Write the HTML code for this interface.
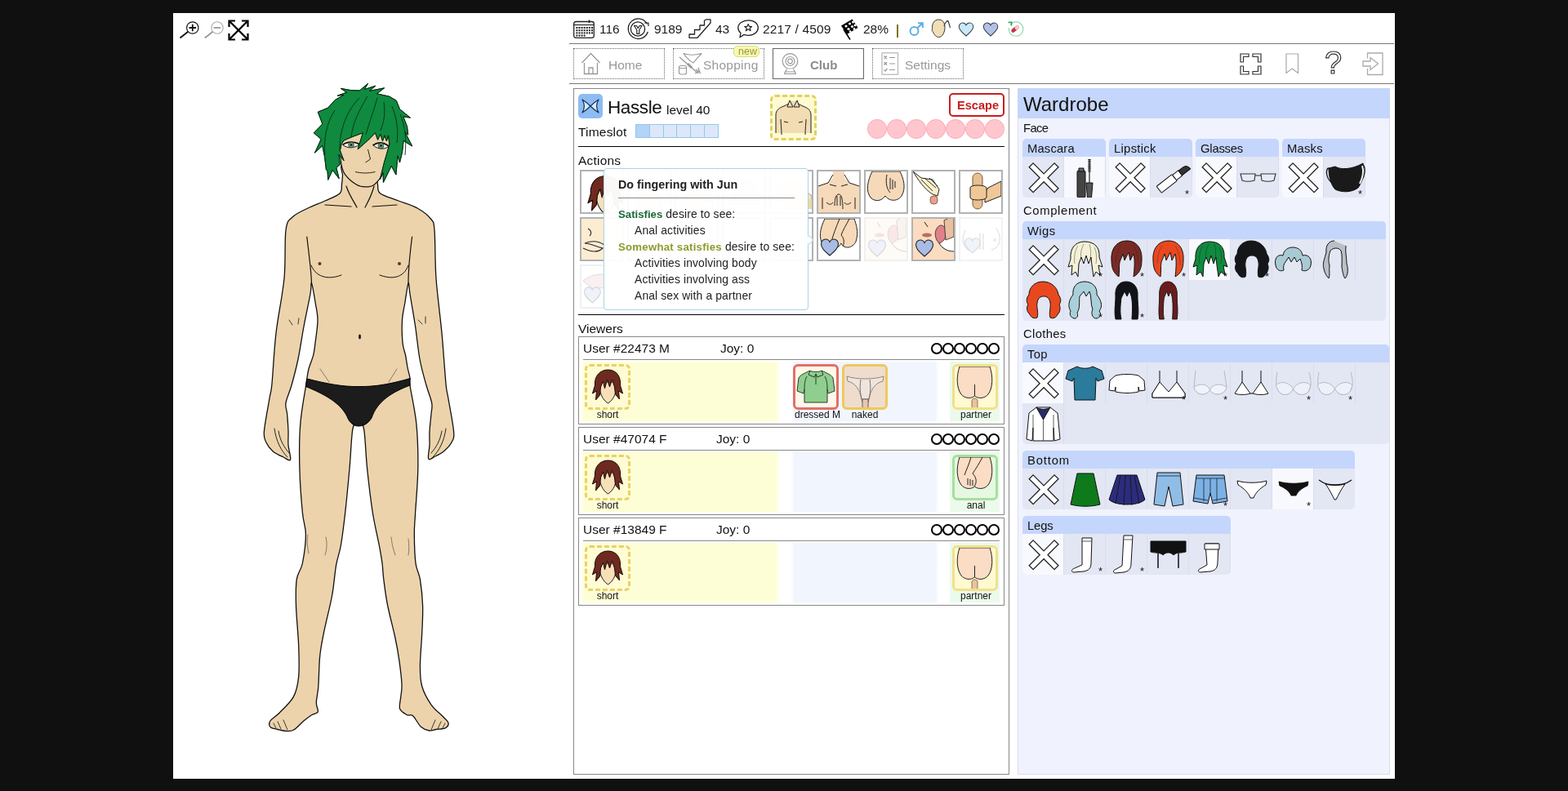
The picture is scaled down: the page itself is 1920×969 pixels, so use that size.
<!DOCTYPE html><html><head><meta charset="utf-8"><title>Club</title><style>
*{box-sizing:border-box;margin:0;padding:0}
html,body{width:1920px;height:969px;overflow:hidden;background:#101010}
body{font-family:"Liberation Sans",sans-serif;color:#1a1a1a;position:relative}
#app{position:absolute;left:212px;top:16px;width:1496px;height:938px;background:#fff}
.a{position:absolute}
.t{position:absolute;white-space:nowrap;line-height:1;will-change:transform}
svg{position:absolute;overflow:visible}
.hl{position:absolute;height:1px;background:#777}
.nav{position:absolute;top:59px;width:112px;height:38px;border:1px dotted #666}
.cell{position:absolute;width:54px;height:54px;border:2px solid #b2b2b2;background:#fff;overflow:hidden}
.cell svg,.ib svg,.wc svg{left:0;top:0}
.wc svg{will-change:transform}
.vb{position:absolute;left:708px;width:522px;height:108px;border:1px solid #888}
.ib{position:absolute;width:56px;height:56px;border-radius:6px;overflow:hidden}
.grp{position:absolute;background:#e3e6f3;border-radius:5px;overflow:hidden}
.gh{position:absolute;left:0;top:0;right:0;height:22px;background:#c5d6fc}
.wc{position:absolute;width:51px;height:50px;border-right:1px solid #d9ddee}
.sel{background:#f8f9fe}
</style></head><body><div id="app"></div>
<svg style="left:219px;top:24px;" width="28" height="26" viewBox="0 0 28 26"><circle cx="16.8" cy="10" r="7.2" fill="#fff" stroke="#111" stroke-width="1.2"/><path d="M12.5 10h8.600M16.8 5.700v8.6" stroke="#111" stroke-width="1.8" fill="none"/><path d="M1.5 22.500L11.3 14.8" stroke="#111" stroke-width="1.9"/></svg>
<svg style="left:249px;top:24px;" width="28" height="26" viewBox="0 0 28 26"><circle cx="17" cy="10" r="7.2" fill="#fff" stroke="#aaa" stroke-width="1.1"/><path d="M12.5 10h8.6" stroke="#999" stroke-width="1.8" fill="none"/><path d="M1.8 22.500L11.5 14.8" stroke="#999" stroke-width="1.9"/></svg>
<svg style="left:279px;top:24px;" width="26" height="26" viewBox="0 0 26 26"><path d="M2 2L24 24M24 2L2 24" stroke="#000" stroke-width="2.3" fill="none"/><path d="M1.5 9V1.500H9M17 1.500H24.500V9M24.5 17V24.500H17M9 24.500H1.500V17" stroke="#000" stroke-width="2.2" fill="none"/></svg>
<svg style="left:0px;top:0px;" width="700" height="969" viewBox="0 0 700 969">
<path d="M421.0 200.0C414.2 202.5 419.9 210.7 419.5 215.0C419.1 219.3 419.1 222.3 418.5 226.0C417.9 229.7 419.4 233.7 416.0 237.0C412.6 240.3 404.5 243.0 398.0 246.0C391.5 249.0 383.7 251.7 377.0 255.0C370.3 258.3 362.5 261.5 358.0 266.0C353.5 270.5 351.7 269.5 350.0 282.0C348.3 294.5 350.0 320.0 348.0 341.0C346.0 362.0 340.5 386.5 338.0 408.0C335.5 429.5 334.3 456.7 333.0 470.0C331.7 483.3 331.6 478.2 330.0 488.0C328.4 497.8 324.1 519.6 323.4 528.6C322.7 537.6 324.2 538.0 326.0 542.0C327.8 546.0 330.5 549.7 334.0 552.7C337.5 555.7 343.4 558.3 347.0 560.0C350.6 561.7 354.6 565.5 355.6 563.0C356.6 560.5 353.4 550.7 353.0 545.0C352.6 539.3 353.2 534.9 353.0 528.6C352.8 522.3 352.1 512.8 351.6 507.0C351.1 501.2 349.1 499.5 350.0 493.7C350.9 487.9 354.5 480.9 357.0 472.0C359.5 463.1 362.5 452.0 365.0 440.0C367.5 428.0 369.5 413.3 372.0 400.0C374.5 386.7 378.4 368.8 380.0 360.0C381.6 351.2 380.5 345.3 381.5 347.0C382.5 348.7 384.8 362.5 386.0 370.0C387.2 377.5 389.0 383.7 389.0 392.0C389.0 400.3 386.9 412.9 386.0 420.0C385.1 427.1 385.1 429.4 383.8 434.7C382.5 440.0 379.3 447.1 378.0 452.0C376.7 456.9 376.4 460.4 375.8 464.0C375.2 467.6 375.8 464.1 374.4 473.5C373.0 482.9 368.9 503.8 367.7 520.5C366.4 537.2 366.4 556.1 366.9 574.0C367.3 591.9 369.1 614.5 370.4 628.0C371.6 641.5 374.4 644.4 374.4 654.7C374.4 665.0 372.2 680.8 370.4 690.0C368.5 699.2 364.6 701.0 363.3 709.7C362.0 718.4 362.1 728.4 362.5 742.0C362.9 755.6 365.2 777.1 365.7 791.5C366.2 805.9 366.7 818.3 365.7 828.6C364.7 838.9 363.4 846.0 359.5 853.4C355.6 860.8 346.9 868.3 342.2 873.2C337.4 878.1 332.9 880.1 331.0 883.0C329.1 885.9 329.6 888.9 331.0 890.6C332.4 892.4 336.6 892.7 339.7 893.5C342.8 894.3 346.3 895.4 349.6 895.5C352.9 895.6 355.8 896.4 359.5 894.3C363.2 892.2 368.3 886.1 372.0 883.0C375.7 879.9 378.9 877.5 381.8 875.7C384.7 873.9 388.4 874.5 389.3 872.0C390.2 869.5 387.2 866.0 387.3 860.8C387.4 855.6 389.1 850.5 389.8 841.0C390.5 831.5 390.6 815.1 391.7 803.9C392.8 792.7 394.2 786.4 396.7 774.0C399.2 761.6 404.1 743.1 406.6 729.5C409.1 715.9 409.8 702.6 411.6 692.4C413.4 682.1 415.5 678.7 417.4 668.0C419.2 657.3 420.9 643.7 422.7 628.0C424.5 612.3 426.4 591.2 428.0 574.0C429.6 556.8 430.2 533.8 432.0 525.0C433.8 516.2 436.6 521.0 438.8 521.0C441.1 521.0 443.7 516.2 445.5 525.0C447.3 533.8 447.8 556.8 449.6 574.0C451.4 591.2 453.9 612.3 456.3 628.0C458.8 643.7 462.4 657.7 464.3 668.0C466.2 678.3 467.1 683.0 468.0 690.0C468.9 697.0 468.7 701.0 469.8 709.7C470.9 718.4 472.4 730.5 474.7 742.0C477.0 753.5 481.0 767.9 483.4 779.0C485.8 790.1 487.4 798.9 488.8 808.8C490.2 818.7 491.7 831.1 492.0 838.5C492.3 845.9 491.2 848.4 490.8 853.4C490.4 858.4 488.4 864.6 489.6 868.3C490.9 872.0 495.6 874.2 498.3 875.7C501.0 877.2 502.8 874.5 505.7 877.0C508.6 879.5 512.3 887.6 515.6 890.6C518.9 893.6 522.4 894.5 525.5 895.0C528.6 895.5 530.9 894.0 534.2 893.5C537.5 893.0 542.8 893.1 545.3 891.8C547.8 890.5 549.4 887.9 549.0 885.6C548.6 883.3 546.3 881.9 542.8 878.2C539.3 874.5 532.3 869.5 528.0 863.3C523.7 857.1 519.1 848.9 516.8 841.0C514.5 833.1 514.4 827.4 514.4 816.2C514.4 805.0 516.3 786.4 516.8 774.0C517.3 761.6 518.0 752.7 517.6 742.0C517.2 731.3 515.8 718.4 514.4 709.7C513.0 701.0 510.2 699.2 509.0 690.0C507.8 680.8 507.4 665.0 507.3 654.7C507.2 644.4 507.9 641.5 508.6 628.0C509.4 614.5 511.6 591.9 511.8 574.0C512.0 556.1 511.6 537.5 510.0 520.5C508.4 503.5 503.3 481.6 502.0 472.0C500.7 462.4 502.5 466.7 502.0 463.0C501.5 459.3 499.9 454.7 499.0 450.0C498.1 445.3 497.5 440.0 496.5 435.0C495.5 430.0 493.7 427.2 493.0 420.0C492.3 412.8 492.0 400.3 492.5 392.0C493.0 383.7 494.8 377.5 496.0 370.0C497.2 362.5 499.0 348.7 500.0 347.0C501.0 345.3 500.6 351.2 502.0 360.0C503.4 368.8 506.6 386.7 508.6 400.0C510.6 413.3 511.8 428.0 514.0 440.0C516.2 452.0 519.5 463.1 522.0 472.0C524.5 480.9 527.7 487.9 528.7 493.7C529.7 499.5 528.5 501.2 528.0 507.0C527.5 512.8 526.3 522.3 526.0 528.6C525.7 534.9 526.2 539.4 526.0 545.0C525.8 550.6 523.5 559.7 524.7 562.0C525.9 564.3 529.9 560.5 533.0 559.0C536.1 557.5 540.2 555.5 543.5 552.7C546.8 549.9 550.9 546.0 552.9 542.0C554.9 538.0 556.3 537.6 555.6 528.6C554.9 519.6 550.5 497.8 548.9 488.0C547.3 478.2 547.3 483.3 546.0 470.0C544.7 456.7 543.0 429.5 541.0 408.0C539.0 386.5 535.5 362.0 534.0 341.0C532.5 320.0 533.1 294.2 532.0 282.0C530.9 269.8 530.9 272.5 527.4 268.0C523.9 263.5 517.6 258.7 511.0 255.0C504.4 251.3 495.6 249.0 488.0 246.0C480.4 243.0 469.9 240.3 465.7 237.0C461.4 233.7 463.2 229.7 462.5 226.0C461.8 222.3 461.9 219.3 461.5 215.0C461.1 210.7 466.8 202.5 460.0 200.0C453.2 197.5 427.8 197.5 421.0 200.0Z" fill="#ecd3ab" stroke="#111" stroke-width="1.3" stroke-linejoin="round"/>
<path d="M375.8 464 C400 470 420 474 438.8 473.5 C460 474 480 470 502 463.6 L502 472 C481 480 462 491 455 512 C450 520 444 522 438.8 522 C432 522 427 516 425 510 C417 494 398 483 374.4 473.5 Z" fill="#1c1c1c" stroke="#000" stroke-width="1"/>
<g stroke="#111" stroke-width="1.2" fill="none" stroke-linecap="round">
<path d="M375.8 290 C378 310 381 330 381.5 347 M504.6 290 C502 310 500 330 500 347"/>
<path d="M398 251 L430 253 M456 253 L486 251 M424 228 C428 240 434 248 437 254 M458 228 C455 240 450 248 447 254"/>
<path d="M381 325 C388 342 405 342 418 337 M465 337 C478 342 494 342 500 325" stroke-width="1"/>
<path d="M392 452 L403 468 M486 452 L476 468" stroke-width="0.7" stroke="#555"/>
<path d="M377 655 C375 665 377 672 378 678 M399 658 C401 666 400 674 398 680 M479 658 C480 668 482 674 484 680 M500 660 C501 668 501 674 500 680" stroke-width="0.7" stroke="#555"/>
<path d="M354 392 L358 398 M366 390 L365 397 M512 392 L517 397 M521 388 L521 396" stroke-width="0.8"/>
<path d="M336 525 C338 540 344 552 352 560 M341 528 C343 540 348 548 354 555 M546 525 C544 540 538 552 530 560 M541 528 C539 540 534 548 528 555" stroke-width="0.9"/>
<path d="M335 886 L338 892 M340 884 L344 893 M347 882 L352 894 M545 886 L542 892 M540 884 L536 893 M533 882 L528 894" stroke-width="0.8"/>
</g>
<circle cx="391.5" cy="323" r="2" fill="#5a3530"/><circle cx="489" cy="323" r="2" fill="#5a3530"/>
<ellipse cx="440.5" cy="412.5" rx="1.5" ry="3" fill="#222"/>
<path d="M416.4 155.0C411.3 162.8 416.2 175.1 416.4 182.9C416.7 190.6 417.0 196.3 418.0 201.5C419.0 206.6 419.5 209.7 422.6 213.8C425.7 218.0 432.4 223.7 436.6 226.2C440.7 228.7 443.8 228.9 447.4 228.9C451.0 228.9 454.6 229.0 458.2 226.2C461.8 223.5 466.4 217.5 469.1 212.3C471.7 207.1 472.7 201.2 474.0 195.3C475.4 189.3 476.7 183.4 477.1 176.7C477.6 170.0 481.8 161.7 476.8 155.0C471.9 148.3 457.5 136.4 447.4 136.4C437.3 136.4 421.6 147.3 416.4 155.0Z" fill="#ecd3ab" stroke="#111" stroke-width="1.2"/>
<g stroke="#111" stroke-width="1" fill="none">
<path d="M420 177.500C425 173.5 434 173.5 440 177 434 182 425 182 420 177.500Z" fill="#f4f4f0"/>
<path d="M457 178C463 174 470 174.5 476 179.5 470 183.5 463 183 457 178Z" fill="#f4f4f0"/>
<path d="M419.5 177.500C425 173 434 173 440.5 176.500M456.5 178C463 173.5 470 174 476.5 179.5" stroke-width="1.7"/>
<path d="M450.5 183 L453.5 195 L447.5 199 M435 210.5 C442 212.5 452 212.5 459.5 210.5" stroke-width="0.9"/>
</g>
<circle cx="430" cy="177.5" r="3.4" fill="#6d9a7c" stroke="#222" stroke-width="0.6"/><circle cx="466.5" cy="178.5" r="3.4" fill="#6d9a7c" stroke="#222" stroke-width="0.6"/>
<circle cx="430" cy="177.5" r="1.3" fill="#111"/><circle cx="466.5" cy="178.5" r="1.3" fill="#111"/>
<path d="M440.4 110.9L450.5 102.4L446.2 109.5L459.8 105.2L452.4 111.4L470.6 107.8L461.6 114.8L476.8 118.2L485.3 123.3L489.5 133.7L502.4 144.2L493.8 142.9L498.5 155.0L499.7 165.1L495.7 161.5L504.7 179.0L494.1 172.4L492.6 186.3L489.5 199.1L487.0 190.9L484.9 214.1L479.3 203.3L476.8 208.4L469.4 223.4L469.1 211.5L465.2 220.0L470.6 198.4L473.4 189.1L476.8 176.7L475.6 165.9L473.4 172.8L470.9 165.9L468.5 172.8L465.7 164.3L462.6 171.3L459.5 162.8L450.5 172.0L438.1 182.9L444.3 162.8L431.9 167.4L421.1 172.0L418.0 176.7L416.4 184.4L421.1 196.8L414.9 189.1L416.4 201.5L411.8 205.3L415.2 218.8L407.2 208.4L401.7 220.3L401.0 209.2L399.4 208.0L397.6 192.5L394.8 178.5L385.5 187.2L393.2 170.5L384.2 162.8L394.8 151.9L389.3 137.2L401.7 132.1L410.2 122.5L421.1 116.3L413.3 117.2L424.5 113.2L417.2 108.3L429.6 110.6Z" fill="#0f8a3e" stroke="#062" stroke-width="1" stroke-linejoin="round"/>
<path d="M440.4 110.9L450.5 102.4L446.2 109.5L459.8 105.2L452.4 111.4L470.6 107.8L461.6 114.8L476.8 118.2L485.3 123.3L489.5 133.7L502.4 144.2L493.8 142.9L498.5 155.0L499.7 165.1L495.7 161.5L504.7 179.0L494.1 172.4L492.6 186.3L489.5 199.1L487.0 190.9L484.9 214.1L479.3 203.3L476.8 208.4L469.4 223.4L469.1 211.5L465.2 220.0L470.6 198.4L473.4 189.1L476.8 176.7L475.6 165.9L473.4 172.8L470.9 165.9L468.5 172.8L465.7 164.3L462.6 171.3L459.5 162.8L450.5 172.0L438.1 182.9L444.3 162.8L431.9 167.4L421.1 172.0L418.0 176.7L416.4 184.4L421.1 196.8L414.9 189.1L416.4 201.5L411.8 205.3L415.2 218.8L407.2 208.4L401.7 220.3L401.0 209.2L399.4 208.0L397.6 192.5L394.8 178.5L385.5 187.2L393.2 170.5L384.2 162.8L394.8 151.9L389.3 137.2L401.7 132.1L410.2 122.5L421.1 116.3L413.3 117.2L424.5 113.2L417.2 108.3L429.6 110.6Z" fill="none" stroke="#0a1a10" stroke-width="0.9" stroke-linejoin="round"/>
<g stroke="#04301a" stroke-width="0.9" fill="none">
<path d="M440 120 C425 135 415 160 416 185 M450 118 C440 135 432 150 430 168 M462 120 C458 135 452 150 448 165 M470 125 C472 140 470 150 466 160 M480 130 C486 145 488 160 486 175 M410 135 C400 150 396 170 398 190 M490 140 C496 155 498 170 496 190"/>
</g>
</svg>
<svg style="left:702px;top:24px;" width="26" height="23" viewBox="0 0 26 23"><rect x="0.7" y="2.5" width="24.6" height="19.8" rx="2.5" fill="#fff" stroke="#222" stroke-width="1.3"/><path d="M1 6.5H25" stroke="#222" stroke-width="1.2"/><path d="M19.5 0.5V4" stroke="#222" stroke-width="1.6"/>
<g fill="#222"><rect x="3.4" y="9.0" width="2" height="2"/><rect x="6.5" y="9.0" width="2" height="2"/><rect x="9.6" y="9.0" width="2" height="2"/><rect x="12.700000000000001" y="9.0" width="2" height="2"/><rect x="15.8" y="9.0" width="2" height="2"/><rect x="18.9" y="9.0" width="2" height="2"/><rect x="22.0" y="9.0" width="2" height="2"/><rect x="3.4" y="12.2" width="2" height="2"/><rect x="6.5" y="12.2" width="2" height="2"/><rect x="9.6" y="12.2" width="2" height="2"/><rect x="12.700000000000001" y="12.2" width="2" height="2"/><rect x="15.8" y="12.2" width="2" height="2"/><rect x="18.9" y="12.2" width="2" height="2"/><rect x="22.0" y="12.2" width="2" height="2"/><rect x="3.4" y="15.4" width="2" height="2"/><rect x="6.5" y="15.4" width="2" height="2"/><rect x="9.6" y="15.4" width="2" height="2"/><rect x="12.700000000000001" y="15.4" width="2" height="2"/><rect x="15.8" y="15.4" width="2" height="2"/><rect x="18.9" y="15.4" width="2" height="2"/><rect x="22.0" y="15.4" width="2" height="2"/><rect x="3.4" y="18.6" width="2" height="2"/><rect x="6.5" y="18.6" width="2" height="2"/><rect x="9.6" y="18.6" width="2" height="2"/><rect x="12.700000000000001" y="18.6" width="2" height="2"/></g></svg>
<div class="t" style="left:734px;top:28.4px;font-size:15.5px;color:#1a1a1a;font-weight:normal;">116</div>
<svg style="left:768px;top:22px;" width="27" height="27" viewBox="0 0 27 27"><path d="M24.5 7.5A12.3 12.3 0 1 0 25.3 17" fill="none" stroke="#222" stroke-width="1.3"/><circle cx="13" cy="13.5" r="8.6" fill="none" stroke="#222" stroke-width="1.3"/><path d="M8.5 9.5h3l1.8 3 1.8-3h3l-3.3 5v4.8h-3v-4.8z" fill="#fff" stroke="#222" stroke-width="1.2" stroke-linejoin="round"/><path d="M21 6h5v4" fill="none" stroke="#222" stroke-width="1.2"/></svg>
<div class="t" style="left:800.5px;top:28.4px;font-size:15.5px;color:#1a1a1a;font-weight:normal;">9189</div>
<svg style="left:843px;top:23px;" width="28" height="24" viewBox="0 0 28 24"><path d="M1 23.3V19h6.5v-5.5H14V8h5.5V2.2L22 0.8h5V5L11 23.3z" fill="#fff" stroke="#222" stroke-width="1.3" stroke-linejoin="round"/></svg>
<div class="t" style="left:875.5px;top:28.4px;font-size:15.5px;color:#1a1a1a;font-weight:normal;">43</div>
<svg style="left:903px;top:24px;" width="26" height="23" viewBox="0 0 26 23"><path d="M13.5 0.8C20.5 0.8 25.3 5 25.3 10S20.5 19.3 13.5 19.3c-2 0-3.8-.3-5.4-.9L3 21.8l1-5.3C2 14.8.8 12.5.8 10 .8 5 6.5.8 13.5.8z" fill="#fff" stroke="#222" stroke-width="1.3" stroke-linejoin="round"/><path d="M13.2 5.500l1.3 3h3.200l-2.6 2 1 3.2-2.9-2-2.9 2 1-3.2-2.6-2h3.200z" fill="none" stroke="#222" stroke-width="1.1" stroke-linejoin="round"/></svg>
<div class="t" style="left:934px;top:28.4px;font-size:15.5px;color:#1a1a1a;font-weight:normal;letter-spacing:0.15px">2217 / 4509</div>
<svg style="left:1028px;top:22px;" width="24" height="27" viewBox="0 0 24 27"><path d="M2 9.500L15.5 1.5 22.5 12 9 20z" fill="#000"/><path d="M5 14L13 26.5" stroke="#000" stroke-width="1.6"/><g fill="#fff"><circle cx="8" cy="10" r="1.6"/><circle cx="12.5" cy="7" r="1.6"/><circle cx="16.5" cy="5" r="1.5"/><circle cx="11" cy="13.5" r="1.6"/><circle cx="15.5" cy="10.5" r="1.6"/><circle cx="19" cy="9" r="1.4"/><circle cx="13" cy="16.5" r="1.3"/><circle cx="18" cy="13.5" r="1.4"/></g></svg>
<div class="t" style="left:1056.5px;top:28.4px;font-size:15.5px;color:#1a1a1a;font-weight:normal;">28%</div>
<div class="a" style="left:1097.500px;top:29.500px;width:2px;height:16px;background:#7d7520"></div>
<svg style="left:1113px;top:27px;" width="19" height="18" viewBox="0 0 19 18"><circle cx="6.5" cy="11" r="5" fill="none" stroke="#5aaee2" stroke-width="2"/><path d="M10 7.500L16.5 1.500M11 1.200h5.800v5.8" fill="none" stroke="#5aaee2" stroke-width="2"/></svg>
<svg style="left:1140px;top:23px;" width="25" height="24" viewBox="0 0 25 24"><path d="M9.5 1C4 1 1.5 6 1.5 10.500c0 2 0.5 3-.5 4 .5 1 1.5 1.5 1.5 1.500C4 20 6.5 22.5 9.5 22.500c4 0 7.5-5.5 7.5-12S13.5 1 9.5 1z" fill="#f0deb8" stroke="#333" stroke-width="1"/><path d="M16 9C17 5 19 3 21 2.500M21 2.500l-2.5.5M21 2.500L23.5 11" fill="none" stroke="#333" stroke-width="1.1"/></svg>
<svg style="left:1173px;top:26.5px;" width="20" height="18" viewBox="0 0 20 18.5"><path d="M10 17.500C4 12.5 1 9.5 1 6 1 3 3.2 1 5.6 1 7.5 1 9.2 2.2 10 4 10.8 2.2 12.5 1 14.4 1 16.8 1 19 3 19 6c0 3.5-3 6.5-9 11.500z" fill="#c9e9fa" stroke="#3a4550" stroke-width="1.1"/></svg>
<svg style="left:1203px;top:26.5px;" width="20" height="18" viewBox="0 0 20 18.5"><path d="M10 17.500C4 12.5 1 9.5 1 6 1 3 3.2 1 5.6 1 7.5 1 9.2 2.2 10 4 10.8 2.2 12.5 1 14.4 1 16.8 1 19 3 19 6c0 3.5-3 6.5-9 11.500z" fill="#b3c1e6" stroke="#3a4550" stroke-width="1.1"/></svg>
<svg style="left:1233px;top:25px;" width="20" height="20" viewBox="0 0 20 20"><path d="M4 5.500A8.7 8.7 0 1 1 2.5 9" fill="none" stroke="#8fd7a8" stroke-width="1.1"/><path d="M1.5 2.500l4.2-.3-.3 4.2" fill="none" stroke="#2faa55" stroke-width="1.6"/><rect x="4.5" y="8.2" width="11" height="4.6" rx="2.3" transform="rotate(-40 10 10.5)" fill="#c8323c"/><rect x="10" y="8.2" width="5.5" height="4.6" rx="2.3" transform="rotate(-40 10 10.5)" fill="#f3c9cc"/></svg>
<div class="hl" style="left:697px;top:53px;width:1010px"></div>
<div class="hl" style="left:697px;top:102px;width:1010px"></div>
<div class="nav" style="left:702px"></div>
<svg style="left:711px;top:64px;" width="25" height="28" viewBox="0 0 25 28"><path d="M1.5 13L12.5 1.5 23.5 13" fill="none" stroke="#999" stroke-width="1.3" stroke-linejoin="round"/><path d="M4.5 13v13.500h16V13" fill="none" stroke="#999" stroke-width="1.3"/><path d="M10 26.500v-7.500h5v7.5" fill="none" stroke="#999" stroke-width="1.3"/></svg>
<div class="t" style="left:745px;top:71.9px;font-size:15.5px;color:#999;font-weight:normal;">Home</div>
<div class="nav" style="left:824px"></div>
<svg style="left:830px;top:64px;" width="30" height="28" viewBox="0 0 30 28"><path d="M7 1.500C14 4 22 3.5 29 1.5 25 6 21 10 19 13 15 11 10 6 7 1.500z" fill="#fff" stroke="#999" stroke-width="1.2" stroke-linejoin="round"/><path d="M2 6L25 26M22 21l5 4-2-6M21 26l5-3" fill="none" stroke="#999" stroke-width="1.4"/><path d="M12 14l5 5" stroke="#999" stroke-width="3"/><rect x="1.5" y="16.5" width="9" height="10.5" rx="2" fill="#fff" stroke="#999" stroke-width="1.2"/><path d="M1.5 19.500h9" stroke="#999" stroke-width="1"/></svg>
<div class="t" style="left:860.5px;top:71.9px;font-size:15.5px;color:#999;font-weight:normal;letter-spacing:0.25px">Shopping</div>
<div class="a" style="left:898px;top:56px;width:32px;height:14px;background:#f7f7b5;border:1px solid #dcdc80;border-radius:5px"></div>
<div class="t" style="left:903.5px;top:56.9px;font-size:12.5px;color:#9a9a3a;font-weight:normal;">new</div>
<div class="nav" style="left:946px;border:1px solid #666"></div>
<svg style="left:957px;top:65px;" width="21" height="27" viewBox="0 0 21 27"><circle cx="10.5" cy="10" r="9.3" fill="#fff" stroke="#999" stroke-width="1.2"/><circle cx="10.5" cy="10" r="5.5" fill="none" stroke="#999" stroke-width="1.2"/><circle cx="10.5" cy="10" r="2.8" fill="none" stroke="#999" stroke-width="1.2"/><path d="M6.5 19.500C5.5 21 4.5 23 3.5 25.500h14C16.5 23 15.5 21 14.5 19.5" fill="#fff" stroke="#999" stroke-width="1.2" stroke-linejoin="round"/><path d="M4.5 23h12" stroke="#999" stroke-width="1"/></svg>
<div class="t" style="left:991.5px;top:72.3px;font-size:15px;color:#8a8a8a;font-weight:bold;">Club</div>
<div class="nav" style="left:1068px"></div>
<svg style="left:1079px;top:64px;" width="22" height="28" viewBox="0 0 22 28"><rect x="1" y="0.8" width="19.5" height="26.5" fill="#fff" stroke="#bbb" stroke-width="1.3"/><g stroke="#999" stroke-width="1.2" fill="none"><path d="M10 6.500h7M10 14h7M10 21.500h7M3.5 4.500l3.5 3.500M7 4.500L3.5 8M3.5 12l3.5 3.500M7 12l-3.5 3.500M3.5 21.500l1.5 1.5 2.5-3"/></g></svg>
<div class="t" style="left:1108px;top:71.9px;font-size:15.5px;color:#999;font-weight:normal;">Settings</div>
<svg style="left:1518px;top:65px;" width="27" height="27" viewBox="0 0 27 27"><g fill="#fff" stroke="#333" stroke-width="1.2" stroke-linejoin="miter"><path d="M1 11V1h10v3.500H4.500V11z"/><path d="M16 1h10v10h-3.500V4.500H16z"/><path d="M1 16h3.500v6.500H11V26H1z"/><path d="M26 16v10H16v-3.500h6.500V16z"/></g></svg>
<svg style="left:1574px;top:65px;" width="17" height="26" viewBox="0 0 17 26"><path d="M1 1h14.500v23.500L8.2 19 1 24.500z" fill="#fff" stroke="#aaa" stroke-width="1.2" stroke-linejoin="miter"/></svg>
<div class="t" style="left:1621.6px;top:58.3px;font-size:38px;color:#fff;-webkit-text-stroke:1.200px #333;font-weight:normal">?</div>
<svg style="left:1668px;top:64px;" width="26" height="28" viewBox="0 0 26 28"><path d="M6.5 7.500V1H25v26.500H6.500V20" fill="#fff" stroke="#aaa" stroke-width="1.3"/><path d="M1 11h9V6.500l9.5 7.500L10 21.500V17H1z" fill="#fff" stroke="#aaa" stroke-width="1.3" stroke-linejoin="miter"/></svg>
<div class="a" style="left:702px;top:108px;width:534px;height:841px;border:1px solid #888"></div>
<div class="a" style="left:708px;top:115px;width:30px;height:30px;background:#8dbcf2;border-radius:5px"></div>
<svg style="left:708px;top:115px;" width="30" height="30" viewBox="0 0 30 30"><path d="M5 7C10 10 13 13 15 15 17 13 20 10 25 7 22 12 22 18 25 23 20 20 17 17 15 15 13 17 10 20 5 23 8 18 8 12 5 7z" fill="#dcebfb" stroke="#12305a" stroke-width="1.2" stroke-linejoin="round"/></svg>
<div class="t" style="left:743.5px;top:120.7px;font-size:22.5px;color:#111;font-weight:normal;letter-spacing:-0.4px">Hassle</div>
<div class="t" style="left:816px;top:126.6px;font-size:15.5px;color:#111;font-weight:normal;">level 40</div>
<div class="t" style="left:708px;top:153.9px;font-size:15.5px;color:#111;font-weight:normal;letter-spacing:0.2px">Timeslot</div>
<div class="a" style="left:778.0px;top:152px;width:17.8px;height:17px;background:#b5d2f8;border:1px solid #92c8ea"></div>
<div class="a" style="left:794.8px;top:152px;width:17.8px;height:17px;background:#dde7f9;border:1px solid #92c8ea"></div>
<div class="a" style="left:811.6px;top:152px;width:17.8px;height:17px;background:#dde7f9;border:1px solid #92c8ea"></div>
<div class="a" style="left:828.4px;top:152px;width:17.8px;height:17px;background:#dde7f9;border:1px solid #92c8ea"></div>
<div class="a" style="left:845.2px;top:152px;width:17.8px;height:17px;background:#dde7f9;border:1px solid #92c8ea"></div>
<div class="a" style="left:862.0px;top:152px;width:17.8px;height:17px;background:#dde7f9;border:1px solid #92c8ea"></div>
<div class="ib" style="left:943px;top:116px;width:57px;height:56px;border:3px dashed #e0d162;background:#fffbd0"><svg width="51" height="51" viewBox="0 0 51 51"><path d="M4 44V22C4 16 8 13 14 11L20 9 21 5H30L31 9 37 11C43 13 47 16 47 22V44Z" fill="#f2dcb4"/><path d="M4 44V22C4 16 8 13 14 11L20 8M47 44V22C47 16 43 13 37 11L31 8M11 46C11 38 10 32 10 27M40 46C40 38 41 32 41 27M14 30l5 1M37 30l-5 1M21 4l-3 8h7zM30 4l3 8h-7z" fill="none" stroke="#222" stroke-width="1"/></svg></div>
<div class="a" style="left:1162px;top:114px;width:68px;height:29px;border:2px solid #c81e1e;border-radius:5px;background:#fff"></div>
<div class="t" style="left:1171.5px;top:122.2px;font-size:14.6px;color:#c81e1e;font-weight:bold;">Escape</div>
<div class="a" style="left:1062.3px;top:146.3px;width:23.4px;height:23.4px;border-radius:50%;background:#ffc6cd;border:1px solid #f6aab5"></div>
<div class="a" style="left:1086.3px;top:146.3px;width:23.4px;height:23.4px;border-radius:50%;background:#ffc6cd;border:1px solid #f6aab5"></div>
<div class="a" style="left:1110.3px;top:146.3px;width:23.4px;height:23.4px;border-radius:50%;background:#ffc6cd;border:1px solid #f6aab5"></div>
<div class="a" style="left:1134.3px;top:146.3px;width:23.4px;height:23.4px;border-radius:50%;background:#ffc6cd;border:1px solid #f6aab5"></div>
<div class="a" style="left:1158.3px;top:146.3px;width:23.4px;height:23.4px;border-radius:50%;background:#ffc6cd;border:1px solid #f6aab5"></div>
<div class="a" style="left:1182.3px;top:146.3px;width:23.4px;height:23.4px;border-radius:50%;background:#ffc6cd;border:1px solid #f6aab5"></div>
<div class="a" style="left:1206.3px;top:146.3px;width:23.4px;height:23.4px;border-radius:50%;background:#ffc6cd;border:1px solid #f6aab5"></div>
<div class="a" style="left:708px;top:179px;width:522px;height:1px;background:#000"></div>
<div class="t" style="left:708px;top:188.9px;font-size:15.5px;color:#111;font-weight:normal;letter-spacing:0.2px">Actions</div>
<div class="a" style="left:708px;top:385px;width:522px;height:1px;background:#000"></div>
<div class="t" style="left:708px;top:395.2px;font-size:15.5px;color:#111;font-weight:normal;">Viewers</div>
<div class="cell" style="left:710px;top:208px;background:#fff;"><svg width="50" height="50" viewBox="0 0 50 50"><g transform="translate(1 2) scale(1.15)"><path d="M14 18C14 30 18 40 25 44 32 40 36 30 36 18z" fill="#f7dfb8" stroke="#222" stroke-width="1"/><path d="M25 3C15 3 8 11 9 22L6 32 11 29 10 40 15 34 16 24 19 17 21 26 24 15 27 24 30 15 33 24 34 33 39 39 38 29 43 32 40 22C41 11 35 3 25 3z" fill="#6e2a20" stroke="#1a0a08" stroke-width="1" stroke-linejoin="round"/></g></svg></div>
<div class="cell" style="left:768px;top:208px;background:#fff;"><svg width="50" height="50" viewBox="0 0 50 50"><path d="M10 50C10 30 15 15 25 10 35 15 40 30 40 50z" fill="#f3d6c8" stroke="#999" stroke-width="1"/></svg></div>
<div class="cell" style="left:826px;top:208px;background:#fff;"><svg width="50" height="50" viewBox="0 0 50 50"><path d="M5 50C8 30 15 12 28 8 38 14 44 30 46 50z" fill="#f3d6c8" stroke="#999" stroke-width="1"/></svg></div>
<div class="cell" style="left:884px;top:208px;background:#fff;"><svg width="50" height="50" viewBox="0 0 50 50"><path d="M8 40C10 25 20 12 32 10 40 16 44 28 44 40z" fill="#f0d0d0" stroke="#999" stroke-width="1"/></svg></div>
<div class="cell" style="left:942px;top:208px;background:#fff;"><svg width="50" height="50" viewBox="0 0 50 50"><path d="M5 20C15 10 30 10 40 22L50 30V45H20z" fill="#f3e3b8" stroke="#999" stroke-width="1"/><rect x="38" y="34" width="12" height="12" fill="#ead9a0"/></svg></div>
<div class="cell" style="left:1000px;top:208px;background:#fff;"><svg width="50" height="50" viewBox="0 0 50 50"><path d="M0 50V18L12 14 18 8V0H32V8L38 14 50 18V50z" fill="#f6d9b8"/><path d="M0 18L12 14 18 4M50 18L38 14 32 4M14 16l8 2M36 16l-8 2M5 32v14M45 32v14M10 38c3 3 6 3 8 0M40 38c-3 3-6 3-8 0M20 42C20 32 22 28 25 28S30 32 30 46M23 30v12M27 30v12" fill="none" stroke="#222" stroke-width="1"/></svg></div>
<div class="cell" style="left:1058px;top:208px;background:#fff;"><svg width="50" height="50" viewBox="0 0 50 50"><path d="M8 0C2 12 0 24 6 32 12 38 20 36 24 30 28 36 38 38 44 30 50 20 46 8 42 0z" fill="#f6d9b8" stroke="#222" stroke-width="1"/><path d="M26 4C24 14 26 22 30 26M30 8v14M33 10v12M36 12v8" fill="none" stroke="#222" stroke-width="1"/></svg></div>
<div class="cell" style="left:1116px;top:208px;background:#fff;"><svg width="50" height="50" viewBox="0 0 50 50"><path d="M0 0C6 10 14 22 24 28L30 30 32 22 24 10 10 8z" fill="#fbefc8" stroke="#222" stroke-width="1" stroke-linejoin="round"/><path d="M10 10l14 14M14 8l14 12M20 8l10 10" fill="none" stroke="#222" stroke-width="0.9"/><rect x="21" y="30" width="9" height="10" rx="4" fill="#e9a090" stroke="#7a4a40" stroke-width="0.8"/></svg></div>
<div class="cell" style="left:1174px;top:208px;background:#fff;"><svg width="50" height="50" viewBox="0 0 50 50"><path d="M50 12L34 20 30 26V38L50 30z" fill="#f0c898" stroke="#222" stroke-width="1"/><rect x="15" y="2" width="12" height="44" rx="6" fill="#e9c090" stroke="#7a5a30" stroke-width="1"/><path d="M12 20C12 16 30 16 32 20V32C30 36 12 36 12 32z" fill="#f0c898" stroke="#222" stroke-width="1"/></svg></div>
<div class="cell" style="left:710px;top:266px;background:#fdecd2;"><svg width="50" height="50" viewBox="0 0 50 50"><path d="M8 12c4 2 5 6 2 9M2 36C10 40 20 42 26 36 18 34 10 30 4 30M4 30C14 26 22 28 28 32" fill="none" stroke="#222" stroke-width="1.1"/></svg></div>
<div class="cell" style="left:768px;top:266px;background:#fff;"><svg width="50" height="50" viewBox="0 0 50 50"><path d="M10 8H40L44 40H6z" fill="#fff" stroke="#bbb" stroke-width="1"/></svg></div>
<div class="cell" style="left:826px;top:266px;background:#fff;"><svg width="50" height="50" viewBox="0 0 50 50"><path d="M10 8H40L44 40H6z" fill="#fff" stroke="#bbb" stroke-width="1"/></svg></div>
<div class="cell" style="left:884px;top:266px;background:#fff;"><svg width="50" height="50" viewBox="0 0 50 50"><path d="M8 14H42L40 44H10z" fill="#fff" stroke="#bbb" stroke-width="1"/></svg></div>
<div class="cell" style="left:942px;top:266px;background:#fff;"><svg width="50" height="50" viewBox="0 0 50 50"><path d="M8 14H42L40 44H10z" fill="#fff" stroke="#bbb" stroke-width="1"/></svg></div>
<div class="cell" style="left:1000px;top:266px;background:#fff;"><svg width="50" height="50" viewBox="0 0 50 50"><path d="M8 0C2 12 0 24 6 32 12 40 24 38 28 30 32 38 42 36 46 28 50 16 46 6 44 0z" fill="#f6d9b8" stroke="#222" stroke-width="1"/><path d="M26 0C22 10 18 20 16 28M38 0C34 8 30 14 28 20 32 24 32 30 30 34" fill="none" stroke="#222" stroke-width="1"/><path transform="translate(2 23) scale(1.0)" d="M12 22C5 16 1.5 12.5 1.5 8 1.5 4.5 4 2 7 2 9.2 2 11 3.3 12 5.5 13 3.3 14.8 2 17 2 20 2 22.5 4.5 22.5 8 22.5 12.5 19 16 12 22z" fill="#a9bce6" stroke="#222" stroke-width="1.10"/></svg></div>
<div class="cell" style="left:1058px;top:266px;background:#fbe4cf;opacity:0.18;"><svg width="50" height="50" viewBox="0 0 50 50"><path d="M28 14c3-8 10-8 12 0 2 8-2 14-8 16-4-4-6-10-4-16z" fill="#e08088" stroke="#222" stroke-width="0.8"/><ellipse cx="17" cy="20" rx="6" ry="2.5" fill="#b87060"/><path d="M38 2L50 -4V22L40 26z" fill="#e8c0a0" stroke="#222" stroke-width="0.8"/><path d="M50 40C40 40 34 34 32 30" fill="none" stroke="#222" stroke-width="1"/><path d="M14 4l4 6" stroke="#222" stroke-width="1"/><path transform="translate(2 24) scale(1.0)" d="M12 22C5 16 1.5 12.5 1.5 8 1.5 4.5 4 2 7 2 9.2 2 11 3.3 12 5.5 13 3.3 14.8 2 17 2 20 2 22.5 4.5 22.5 8 22.5 12.5 19 16 12 22z" fill="#a9bce6" stroke="#222" stroke-width="1.10"/></svg></div>
<div class="cell" style="left:1116px;top:266px;background:#fbdcc0;"><svg width="50" height="50" viewBox="0 0 50 50"><path d="M33 28C37 38 44 40 50 41V22z" fill="#fff"/><path d="M28 14c3-8 10-8 12 0 2 8-2 14-8 16-4-4-6-10-4-16z" fill="#e08088" stroke="#222" stroke-width="0.8"/><ellipse cx="17" cy="20" rx="6" ry="2.5" fill="#b87060"/><path d="M38 2L50 -4V22L40 26z" fill="#e8c0a0" stroke="#222" stroke-width="0.8"/><path d="M50 40C40 40 34 34 32 30" fill="none" stroke="#222" stroke-width="1"/><path d="M14 4l4 6" stroke="#222" stroke-width="1"/><path transform="translate(2 24) scale(1.0)" d="M12 22C5 16 1.5 12.5 1.5 8 1.5 4.5 4 2 7 2 9.2 2 11 3.3 12 5.5 13 3.3 14.8 2 17 2 20 2 22.5 4.5 22.5 8 22.5 12.5 19 16 12 22z" fill="#a9bce6" stroke="#222" stroke-width="1.10"/></svg></div>
<div class="cell" style="left:1174px;top:266px;background:#fff;opacity:0.16;"><svg width="50" height="50" viewBox="0 0 50 50"><path d="M6 14C0 26 4 38 14 40M44 12C52 24 48 36 38 38M24 18v20M28 18v20" fill="none" stroke="#222" stroke-width="1"/><circle cx="42" cy="26" r="2" fill="#c08080"/><path transform="translate(4 22) scale(0.9)" d="M12 22C5 16 1.5 12.5 1.5 8 1.5 4.5 4 2 7 2 9.2 2 11 3.3 12 5.5 13 3.3 14.8 2 17 2 20 2 22.5 4.5 22.5 8 22.5 12.5 19 16 12 22z" fill="#a9bce6" stroke="#222" stroke-width="1.22"/></svg></div>
<div class="cell" style="left:710px;top:324px;background:#fff;opacity:0.18;"><svg width="50" height="50" viewBox="0 0 50 50"><path d="M2 18C14 8 30 8 44 16L30 26 14 28z" fill="#e8b0b0" stroke="#222" stroke-width="0.8"/><path transform="translate(2 24) scale(0.95)" d="M12 22C5 16 1.5 12.5 1.5 8 1.5 4.5 4 2 7 2 9.2 2 11 3.3 12 5.5 13 3.3 14.8 2 17 2 20 2 22.5 4.5 22.5 8 22.5 12.5 19 16 12 22z" fill="#a9bce6" stroke="#222" stroke-width="1.16"/></svg></div>
<div class="a" style="left:739px;top:206px;width:251px;height:174px;background:rgba(255,255,255,0.965);border:1px solid #a9d3e6;border-radius:4px"></div>
<div class="a" style="left:986.5px;top:289.500px;width:8px;height:8px;background:#fff;border-top:1px solid #a9d3e6;border-right:1px solid #a9d3e6;transform:rotate(45deg);opacity:.9"></div>
<div class="t" style="left:756.5px;top:218.7px;font-size:14.3px;color:#222;font-weight:bold;">Do fingering with Jun</div>
<div class="a" style="left:756.5px;top:241.800px;width:216px;height:1px;background:#888"></div>
<div class="t" style="left:756.5px;top:255.8px;font-size:13.9px;color:#222;font-weight:normal;letter-spacing:0.12px"><b style="color:#1c6b38;font-size:13.2px;letter-spacing:0">Satisfies</b> desire to see:</div>
<div class="t" style="left:776.5px;top:275.8px;font-size:13.9px;color:#222;font-weight:normal;letter-spacing:0.12px">Anal activities</div>
<div class="t" style="left:756.5px;top:295.9px;font-size:13.9px;color:#222;font-weight:normal;letter-spacing:0.12px"><b style="color:#8e9a2c;font-size:13.2px;letter-spacing:0.25px">Somewhat satisfies</b> desire to see:</div>
<div class="t" style="left:776.5px;top:315.7px;font-size:13.9px;color:#222;font-weight:normal;letter-spacing:0.12px">Activities involving body</div>
<div class="t" style="left:776.5px;top:335.7px;font-size:13.9px;color:#222;font-weight:normal;letter-spacing:0.12px">Activities involving ass</div>
<div class="t" style="left:776.5px;top:355.7px;font-size:13.9px;color:#222;font-weight:normal;letter-spacing:0.12px">Anal sex with a partner</div>
<div class="vb" style="top:412px"></div>
<div class="t" style="left:714.3px;top:418.9px;font-size:15.5px;color:#111;font-weight:normal;">User #22473 M</div>
<div class="t" style="left:881.5px;top:418.9px;font-size:15.5px;color:#111;font-weight:normal;">Joy: 0</div>
<div class="a" style="left:1139.8px;top:420px;width:14.2px;height:14.2px;border-radius:50%;border:2.5px solid #000;background:#fff"></div>
<div class="a" style="left:1153.8px;top:420px;width:14.2px;height:14.2px;border-radius:50%;border:2.5px solid #000;background:#fff"></div>
<div class="a" style="left:1167.9px;top:420px;width:14.2px;height:14.2px;border-radius:50%;border:2.5px solid #000;background:#fff"></div>
<div class="a" style="left:1182.0px;top:420px;width:14.2px;height:14.2px;border-radius:50%;border:2.5px solid #000;background:#fff"></div>
<div class="a" style="left:1196.0px;top:420px;width:14.2px;height:14.2px;border-radius:50%;border:2.5px solid #000;background:#fff"></div>
<div class="a" style="left:1210.0px;top:420px;width:14.2px;height:14.2px;border-radius:50%;border:2.5px solid #000;background:#fff"></div>
<div class="a" style="left:714px;top:440px;width:510px;height:1px;background:#888"></div>
<div class="a" style="left:711px;top:443px;width:244px;height:73px;background:linear-gradient(90deg,#fff 0,#fefed6 1.5%,#fefed6 98%,#fff 100%)"></div>
<div class="a" style="left:968px;top:443px;width:182px;height:73px;background:linear-gradient(90deg,#fff 0,#f1f5fd 3%,#f1f5fd 97%,#fff 100%)"></div>
<div class="a" style="left:1163px;top:443px;width:61px;height:73px;background:#ebfaea"></div>
<div class="ib" style="left:716px;top:446px;border:3px dashed #e6d368;background:#fffbd3"><svg width="51" height="51" viewBox="0 0 51 51"><g transform="translate(0.5 1)"><path d="M14 18C14 30 18 40 25 44 32 40 36 30 36 18z" fill="#f7dfb8" stroke="#222" stroke-width="1"/><path d="M25 3C15 3 8 11 9 22L6 32 11 29 10 40 15 34 16 24 19 17 21 26 24 15 27 24 30 15 33 24 34 33 39 39 38 29 43 32 40 22C41 11 35 3 25 3z" fill="#6e2a20" stroke="#1a0a08" stroke-width="1" stroke-linejoin="round"/></g></svg></div>
<div class="t" style="left:703.8px;width:80px;text-align:center;top:502.3px;font-size:12px;color:#111">short</div>
<div class="ib" style="left:971px;top:446px;border:3px solid #e27068;background:#fff8ea"><svg width="51" height="51" viewBox="0 0 51 51"><path d="M18 5C12 8 6 10 4 14L2 30 10 33 11 28V44H39V28L40 33 48 30 46 14C44 10 38 8 32 5 30 7 20 7 18 5z" fill="#8fce8f" stroke="#2a3a2a" stroke-width="1" stroke-linejoin="round"/><path d="M18 5L16 10 23 13 25 9 27 13 34 10 32 5M25 9V22M11 28C11 20 12 16 14 12M39 28C39 20 38 16 36 12" fill="none" stroke="#2a3a2a" stroke-width="1"/></svg></div>
<div class="t" style="left:961px;width:80px;text-align:center;top:502.3px;font-size:12px;color:#111">dressed M</div>
<div class="ib" style="left:1031px;top:446px;border:3px solid #ecc95e;background:#f0dccc"><svg width="51" height="51" viewBox="0 0 51 51"><path d="M3 12C14 16 37 16 48 12L47 18C38 20 32 28 30 40H21C19 28 13 20 4 18z" fill="#f0e4dc" stroke="#888" stroke-width="1"/><path d="M20 16C18 28 20 36 22 44M31 16C33 28 31 36 29 44" fill="none" stroke="#666" stroke-width="0.9"/><path d="M22 51V40H29V51" fill="#e8c8b0" stroke="#555" stroke-width="0.9"/></svg></div>
<div class="t" style="left:1019px;width:80px;text-align:center;top:502.3px;font-size:12px;color:#111">naked</div>
<div class="ib" style="left:1166px;top:446px;border:3px solid #f1e08c;background:#fffad2"><svg width="51" height="51" viewBox="0 0 51 51"><path d="M6 0C2 12 2 26 8 34 12 39 20 40 24.5 36 29 40 37 39 41 34 47 26 47 12 43 0z" fill="#fbdcc4" stroke="#222" stroke-width="1"/><path d="M24.5 22v14" stroke="#222" stroke-width="1"/><path d="M21 51V42C21 38 28 38 28 42V51z" fill="#e9c39c" stroke="#7a5a40" stroke-width="0.8"/></svg></div>
<div class="t" style="left:1154.5px;width:80px;text-align:center;top:502.3px;font-size:12px;color:#111">partner</div>
<div class="vb" style="top:523px"></div>
<div class="t" style="left:714.3px;top:529.9px;font-size:15.5px;color:#111;font-weight:normal;">User #47074 F</div>
<div class="t" style="left:876.7px;top:529.9px;font-size:15.5px;color:#111;font-weight:normal;">Joy: 0</div>
<div class="a" style="left:1139.8px;top:531px;width:14.2px;height:14.2px;border-radius:50%;border:2.5px solid #000;background:#fff"></div>
<div class="a" style="left:1153.8px;top:531px;width:14.2px;height:14.2px;border-radius:50%;border:2.5px solid #000;background:#fff"></div>
<div class="a" style="left:1167.9px;top:531px;width:14.2px;height:14.2px;border-radius:50%;border:2.5px solid #000;background:#fff"></div>
<div class="a" style="left:1182.0px;top:531px;width:14.2px;height:14.2px;border-radius:50%;border:2.5px solid #000;background:#fff"></div>
<div class="a" style="left:1196.0px;top:531px;width:14.2px;height:14.2px;border-radius:50%;border:2.5px solid #000;background:#fff"></div>
<div class="a" style="left:1210.0px;top:531px;width:14.2px;height:14.2px;border-radius:50%;border:2.5px solid #000;background:#fff"></div>
<div class="a" style="left:714px;top:551px;width:510px;height:1px;background:#888"></div>
<div class="a" style="left:711px;top:554px;width:244px;height:73px;background:linear-gradient(90deg,#fff 0,#fefed6 1.5%,#fefed6 98%,#fff 100%)"></div>
<div class="a" style="left:968px;top:554px;width:182px;height:73px;background:linear-gradient(90deg,#fff 0,#f1f5fd 3%,#f1f5fd 97%,#fff 100%)"></div>
<div class="a" style="left:1163px;top:554px;width:61px;height:73px;background:#ebfaea"></div>
<div class="ib" style="left:716px;top:557px;border:3px dashed #e6d368;background:#fffbd3"><svg width="51" height="51" viewBox="0 0 51 51"><g transform="translate(0.5 1)"><path d="M14 18C14 30 18 40 25 44 32 40 36 30 36 18z" fill="#f7dfb8" stroke="#222" stroke-width="1"/><path d="M25 3C15 3 8 11 9 22L6 32 11 29 10 40 15 34 16 24 19 17 21 26 24 15 27 24 30 15 33 24 34 33 39 39 38 29 43 32 40 22C41 11 35 3 25 3z" fill="#6e2a20" stroke="#1a0a08" stroke-width="1" stroke-linejoin="round"/></g></svg></div>
<div class="t" style="left:703.8px;width:80px;text-align:center;top:613.3px;font-size:12px;color:#111">short</div>
<div class="ib" style="left:1166px;top:557px;border:3px solid #a6dfa0;background:#e7f8e2"><svg width="51" height="51" viewBox="0 0 51 51"><path d="M6 0C2 12 2 26 8 34 12 39 20 40 24.5 36 29 40 37 39 41 34 47 26 47 12 43 0z" fill="#fbdcc4" stroke="#222" stroke-width="1"/><path d="M20 0C18 8 14 16 12 22M34 0C30 8 26 14 22 20 26 24 28 30 24 36M16 26v8M19 27v8M22 28v7" fill="none" stroke="#222" stroke-width="1"/></svg></div>
<div class="t" style="left:1154.5px;width:80px;text-align:center;top:613.3px;font-size:12px;color:#111">anal</div>
<div class="vb" style="top:634px"></div>
<div class="t" style="left:714.3px;top:640.9px;font-size:15.5px;color:#111;font-weight:normal;">User #13849 F</div>
<div class="t" style="left:876.7px;top:640.9px;font-size:15.5px;color:#111;font-weight:normal;">Joy: 0</div>
<div class="a" style="left:1139.8px;top:642px;width:14.2px;height:14.2px;border-radius:50%;border:2.5px solid #000;background:#fff"></div>
<div class="a" style="left:1153.8px;top:642px;width:14.2px;height:14.2px;border-radius:50%;border:2.5px solid #000;background:#fff"></div>
<div class="a" style="left:1167.9px;top:642px;width:14.2px;height:14.2px;border-radius:50%;border:2.5px solid #000;background:#fff"></div>
<div class="a" style="left:1182.0px;top:642px;width:14.2px;height:14.2px;border-radius:50%;border:2.5px solid #000;background:#fff"></div>
<div class="a" style="left:1196.0px;top:642px;width:14.2px;height:14.2px;border-radius:50%;border:2.5px solid #000;background:#fff"></div>
<div class="a" style="left:1210.0px;top:642px;width:14.2px;height:14.2px;border-radius:50%;border:2.5px solid #000;background:#fff"></div>
<div class="a" style="left:714px;top:662px;width:510px;height:1px;background:#888"></div>
<div class="a" style="left:711px;top:665px;width:244px;height:73px;background:linear-gradient(90deg,#fff 0,#fefed6 1.5%,#fefed6 98%,#fff 100%)"></div>
<div class="a" style="left:968px;top:665px;width:182px;height:73px;background:linear-gradient(90deg,#fff 0,#f1f5fd 3%,#f1f5fd 97%,#fff 100%)"></div>
<div class="a" style="left:1163px;top:665px;width:61px;height:73px;background:#ebfaea"></div>
<div class="ib" style="left:716px;top:668px;border:3px dashed #e6d368;background:#fffbd3"><svg width="51" height="51" viewBox="0 0 51 51"><g transform="translate(0.5 1)"><path d="M14 18C14 30 18 40 25 44 32 40 36 30 36 18z" fill="#f7dfb8" stroke="#222" stroke-width="1"/><path d="M25 3C15 3 8 11 9 22L6 32 11 29 10 40 15 34 16 24 19 17 21 26 24 15 27 24 30 15 33 24 34 33 39 39 38 29 43 32 40 22C41 11 35 3 25 3z" fill="#6e2a20" stroke="#1a0a08" stroke-width="1" stroke-linejoin="round"/></g></svg></div>
<div class="t" style="left:703.8px;width:80px;text-align:center;top:724.3px;font-size:12px;color:#111">short</div>
<div class="ib" style="left:1166px;top:668px;border:3px solid #f1e08c;background:#fffad2"><svg width="51" height="51" viewBox="0 0 51 51"><path d="M6 0C2 12 2 26 8 34 12 39 20 40 24.5 36 29 40 37 39 41 34 47 26 47 12 43 0z" fill="#fbdcc4" stroke="#222" stroke-width="1"/><path d="M24.5 22v14" stroke="#222" stroke-width="1"/><path d="M21 51V42C21 38 28 38 28 42V51z" fill="#e9c39c" stroke="#7a5a40" stroke-width="0.8"/></svg></div>
<div class="t" style="left:1154.5px;width:80px;text-align:center;top:724.3px;font-size:12px;color:#111">partner</div>
<div class="a" style="left:1246px;top:108px;width:456px;height:841px;background:#f0f3fd;border:1px solid #d9ddee;border-top:0"></div>
<div class="a" style="left:1246px;top:108px;width:456px;height:37px;background:#c5d6fc"></div>
<div class="t" style="left:1252.5px;top:115.7px;font-size:24px;color:#111;font-weight:normal;">Wardrobe</div>
<div class="t" style="left:1252.5px;top:150.1px;font-size:14.8px;color:#111;font-weight:normal;letter-spacing:-0.6px">Face</div>
<div class="t" style="left:1252.5px;top:251.0px;font-size:14.8px;color:#111;font-weight:normal;letter-spacing:0.65px">Complement</div>
<div class="t" style="left:1252.5px;top:401.7px;font-size:14.8px;color:#111;font-weight:normal;letter-spacing:0.33px">Clothes</div>
<div class="grp" style="left:1252px;top:170px;width:102px;height:72px"><div class="gh"></div>
<div class="t" style="left:6px;top:5.4px;font-size:14.8px;color:#111;letter-spacing:0.15px">Mascara</div>
<div class="wc" style="left:0px;top:22px"><svg width="51" height="50" viewBox="0 0 51 50"><path transform="translate(-0.8 0)" d="M13.9 7.9L26.9 20.9 39.9 7.9 44.8 12.8 31.8 25.8 44.8 38.8 39.9 43.7 26.9 30.7 13.9 43.7 9 38.8 22 25.8 9 12.800z" fill="#fff" stroke="#222" stroke-width="1.3" stroke-linejoin="miter"/></svg></div>
<div class="wc sel" style="left:51px;top:22px"><svg width="51" height="50" viewBox="0 0 51 50"><rect x="16" y="17" width="10" height="33" rx="1.5" fill="#444" stroke="#111" stroke-width="1" stroke-linejoin="round"/><rect x="18" y="14" width="6" height="4" fill="#666" stroke="#111" stroke-width="1" stroke-linejoin="round"/><path d="M27 32h8l-1.5 18h-5z" fill="#555" stroke="#111" stroke-width="1" stroke-linejoin="round"/><path d="M31 32V4" stroke="#222" stroke-width="1.2"/><path d="M31 3v16" stroke="#222" stroke-width="3.5" stroke-dasharray="1 0.8"/></svg></div>
</div>
<div class="grp" style="left:1358px;top:170px;width:102px;height:72px"><div class="gh"></div>
<div class="t" style="left:6px;top:5.4px;font-size:14.8px;color:#111;letter-spacing:0.3px">Lipstick</div>
<div class="wc sel" style="left:0px;top:22px"><svg width="51" height="50" viewBox="0 0 51 50"><path transform="translate(-0.8 0)" d="M13.9 7.9L26.9 20.9 39.9 7.9 44.8 12.8 31.8 25.8 44.8 38.8 39.9 43.7 26.9 30.7 13.9 43.7 9 38.8 22 25.8 9 12.800z" fill="#fff" stroke="#222" stroke-width="1.3" stroke-linejoin="miter"/></svg></div>
<div class="wc" style="left:51px;top:22px"><svg width="51" height="50" viewBox="0 0 51 50"><g transform="rotate(-38 26 28)"><rect x="6" y="23" width="24" height="10" rx="1" fill="#fff" stroke="#111" stroke-width="1" stroke-linejoin="round"/><rect x="30" y="24" width="9" height="8" fill="#fff" stroke="#111" stroke-width="1" stroke-linejoin="round"/><path d="M39 24.500h7c4 0 6 3 6 7h-13z" fill="#333" stroke="#111" stroke-width="1" stroke-linejoin="round"/></g><text x="44.5" y="50" font-size="13" font-family="Liberation Sans,sans-serif" fill="#111" text-anchor="middle">*</text></svg></div>
</div>
<div class="grp" style="left:1464px;top:170px;width:102px;height:72px"><div class="gh"></div>
<div class="t" style="left:6px;top:5.4px;font-size:14.8px;color:#111;letter-spacing:-0.2px">Glasses</div>
<div class="wc sel" style="left:0px;top:22px"><svg width="51" height="50" viewBox="0 0 51 50"><path transform="translate(-0.8 0)" d="M13.9 7.9L26.9 20.9 39.9 7.9 44.8 12.8 31.8 25.8 44.8 38.8 39.9 43.7 26.9 30.7 13.9 43.7 9 38.8 22 25.8 9 12.800z" fill="#fff" stroke="#222" stroke-width="1.3" stroke-linejoin="miter"/></svg></div>
<div class="wc" style="left:51px;top:22px"><svg width="51" height="50" viewBox="0 0 51 50"><g fill="#e8ebf6" stroke="#333" stroke-width="1.1"><path d="M4 21h18l-1 8c-5 1.5-11 1.5-15 0z"/><path d="M29 21h18l-2 8c-4 1.5-10 1.5-15 0z"/><path d="M22 23h7" fill="none"/></g></svg></div>
</div>
<div class="grp" style="left:1570px;top:170px;width:102px;height:72px"><div class="gh"></div>
<div class="t" style="left:6px;top:5.4px;font-size:14.8px;color:#111;letter-spacing:0.2px">Masks</div>
<div class="wc sel" style="left:0px;top:22px"><svg width="51" height="50" viewBox="0 0 51 50"><path transform="translate(-0.8 0)" d="M13.9 7.9L26.9 20.9 39.9 7.9 44.8 12.8 31.8 25.8 44.8 38.8 39.9 43.7 26.9 30.7 13.9 43.7 9 38.8 22 25.8 9 12.800z" fill="#fff" stroke="#222" stroke-width="1.3" stroke-linejoin="miter"/></svg></div>
<div class="wc" style="left:51px;top:22px"><svg width="51" height="50" viewBox="0 0 51 50"><path d="M14 12C20 16 34 16 48 8 50 18 48 30 42 38 34 44 22 44 14 40 8 34 6 22 6 14z" fill="#1a1a1a" stroke="#111" stroke-width="1" stroke-linejoin="round"/><path d="M6 14C2 14 2 26 10 32M48 10C52 14 50 24 46 30" fill="none" stroke="#111" stroke-width="1.3"/><path d="M47 11C49 17 48 25 44 33" fill="none" stroke="#eee" stroke-width="2"/><text x="44.5" y="50" font-size="13" font-family="Liberation Sans,sans-serif" fill="#111" text-anchor="middle">*</text></svg></div>
</div>
<div class="grp" style="left:1252px;top:271px;width:445px;height:122px"><div class="gh"></div>
<div class="t" style="left:6px;top:5.4px;font-size:14.8px;color:#111;letter-spacing:0.4px">Wigs</div>
<div class="wc" style="left:0px;top:22px"><svg width="51" height="50" viewBox="0 0 51 50"><path transform="translate(-0.8 0)" d="M13.9 7.9L26.9 20.9 39.9 7.9 44.8 12.8 31.8 25.8 44.8 38.8 39.9 43.7 26.9 30.7 13.9 43.7 9 38.8 22 25.8 9 12.800z" fill="#fff" stroke="#222" stroke-width="1.3" stroke-linejoin="miter"/></svg></div>
<div class="wc" style="left:51px;top:22px"><svg width="51" height="50" viewBox="0 0 51 50"><path d="M25 3C13 3 7 12 8 24L5 34 10 32 9 44 14 40 17 46 18 30 21 22 24 30 27 20 30 30 33 22 34 32 36 46 39 40 44 44 42 32 47 34 43 22C44 10 37 3 25 3z" fill="#f4f1d6" stroke="#111" stroke-width="1" stroke-linejoin="round"/><path d="M17 8C13 14 12 22 13 30M24 6C20 14 20 20 21 24M31 6C33 12 33 18 32 24M37 10C40 16 40 24 39 30" fill="none" stroke="#222" stroke-width="0.7" opacity="0.6"/><text x="44.5" y="50" font-size="13" font-family="Liberation Sans,sans-serif" fill="#111" text-anchor="middle">*</text></svg></div>
<div class="wc" style="left:102px;top:22px"><svg width="51" height="50" viewBox="0 0 51 50"><path d="M26 2C13 2 6 12 7 26 7 36 10 42 16 46 17 40 16 34 17 28L21 18 23 26 28 16 30 26 34 18C36 26 35 38 34 46 41 42 44 36 44 26 45 12 38 2 26 2z" fill="#7a2a24" stroke="#111" stroke-width="1" stroke-linejoin="round"/><path d="M18 8C14 14 12 22 12 30M34 8C38 14 40 22 40 32" fill="none" stroke="#222" stroke-width="0.7" opacity="0.5"/><text x="44.5" y="50" font-size="13" font-family="Liberation Sans,sans-serif" fill="#111" text-anchor="middle">*</text></svg></div>
<div class="wc" style="left:153px;top:22px"><svg width="51" height="50" viewBox="0 0 51 50"><path d="M26 2C13 2 6 12 7 26 7 36 10 42 16 46 17 40 16 34 17 28L21 18 23 26 28 16 30 26 34 18C36 26 35 38 34 46 41 42 44 36 44 26 45 12 38 2 26 2z" fill="#e9481f" stroke="#111" stroke-width="1" stroke-linejoin="round"/><path d="M18 8C14 14 12 22 12 30M34 8C38 14 40 22 40 32" fill="none" stroke="#222" stroke-width="0.7" opacity="0.5"/><text x="44.5" y="50" font-size="13" font-family="Liberation Sans,sans-serif" fill="#111" text-anchor="middle">*</text></svg></div>
<div class="wc sel" style="left:204px;top:22px"><svg width="51" height="50" viewBox="0 0 51 50"><path d="M25 3C13 3 7 12 8 24L5 34 10 32 9 44 14 40 17 46 18 30 21 22 24 30 27 20 30 30 33 22 34 32 36 46 39 40 44 44 42 32 47 34 43 22C44 10 37 3 25 3z" fill="#0f8a3e" stroke="#111" stroke-width="1" stroke-linejoin="round"/><path d="M17 8C13 14 12 22 13 30M24 6C20 14 20 20 21 24M31 6C33 12 33 18 32 24M37 10C40 16 40 24 39 30" fill="none" stroke="#222" stroke-width="0.7" opacity="0.6"/><text x="44.5" y="50" font-size="13" font-family="Liberation Sans,sans-serif" fill="#111" text-anchor="middle">*</text></svg></div>
<div class="wc" style="left:255px;top:22px"><svg width="51" height="50" viewBox="0 0 51 50"><path d="M25 2C14 2 8 10 8 18 4 22 5 28 7 30 4 34 6 40 9 42 10 46 15 48 18 46 20 40 17 34 18 28 19 22 22 20 26 20 30 20 33 22 34 28 35 34 32 40 34 46 37 48 42 46 43 42 46 40 47 34 45 30 48 26 47 22 44 18 43 10 36 2 25 2z" fill="#15161a" stroke="#111" stroke-width="1" stroke-linejoin="round"/><text x="44.5" y="50" font-size="13" font-family="Liberation Sans,sans-serif" fill="#111" text-anchor="middle">*</text></svg></div>
<div class="wc" style="left:306px;top:22px"><svg width="51" height="50" viewBox="0 0 51 50"><path d="M25 10C18 10 14 14 13 20 6 18 2 24 4 32 5 38 10 40 14 38 13 34 14 30 16 28L20 22 23 28 27 22 30 28 34 24C36 28 37 34 36 38 40 40 46 38 47 32 49 24 44 18 37 20 36 14 32 10 25 10z" fill="#a9c9d3" stroke="#111" stroke-width="1" stroke-linejoin="round"/></svg></div>
<div class="wc" style="left:357px;top:22px"><svg width="51" height="50" viewBox="0 0 51 50"><path d="M25 2C18 2 14 8 15 16 13 24 10 30 12 36 13 42 16 46 18 48 20 44 18 38 19 32 17 26 18 20 20 14 24 10 30 10 33 14 35 20 34 28 34 34 35 40 36 46 38 48 42 44 42 36 40 30 40 22 38 16 39 8 34 2 25 2z" fill="#b9c1c6" stroke="#111" stroke-width="1" stroke-linejoin="round" stroke="#444"/></svg></div>
<div class="wc" style="left:0px;top:72px"><svg width="51" height="50" viewBox="0 0 51 50"><path d="M25 2C14 2 8 10 8 18 4 22 5 28 7 30 4 34 6 40 9 42 10 46 15 48 18 46 20 40 17 34 18 28 19 22 22 20 26 20 30 20 33 22 34 28 35 34 32 40 34 46 37 48 42 46 43 42 46 40 47 34 45 30 48 26 47 22 44 18 43 10 36 2 25 2z" fill="#e9481f" stroke="#111" stroke-width="1" stroke-linejoin="round"/></svg></div>
<div class="wc" style="left:51px;top:72px"><svg width="51" height="50" viewBox="0 0 51 50"><path d="M25 2C15 2 10 9 11 18 6 24 4 32 8 38 6 42 8 46 12 47 15 48 18 44 16 40 20 34 18 26 19 20L24 14 27 20 31 14C34 20 32 30 35 36 32 42 36 48 40 47 44 46 46 42 43 38 48 32 45 24 40 18 41 9 35 2 25 2z" fill="#a9d0d8" stroke="#111" stroke-width="1" stroke-linejoin="round"/><text x="44.5" y="50" font-size="13" font-family="Liberation Sans,sans-serif" fill="#111" text-anchor="middle">*</text></svg></div>
<div class="wc" style="left:102px;top:72px"><svg width="51" height="50" viewBox="0 0 51 50"><g transform="translate(0.0 0) scale(1.0 1)"><path d="M25 2C16 2 11 9 12 20 12 30 10 38 12 48L19 48C17 40 18 30 19 22L23 14 26 20 29 14C33 22 33 32 32 48L39 48C41 38 39 30 39 20 40 9 34 2 25 2z" fill="#121318" stroke="#111" stroke-width="1" stroke-linejoin="round"/></g><text x="44.5" y="50" font-size="13" font-family="Liberation Sans,sans-serif" fill="#111" text-anchor="middle">*</text></svg></div>
<div class="wc" style="left:153px;top:72px"><svg width="51" height="50" viewBox="0 0 51 50"><g transform="translate(5.1 0) scale(0.8 1)"><path d="M25 2C16 2 11 9 12 20 12 30 10 38 12 48L19 48C17 40 18 30 19 22L23 14 26 20 29 14C33 22 33 32 32 48L39 48C41 38 39 30 39 20 40 9 34 2 25 2z" fill="#6a1c1c" stroke="#111" stroke-width="1" stroke-linejoin="round"/></g></svg></div>
</div>
<div class="grp" style="left:1252px;top:422px;width:449px;height:122px"><div class="gh"></div>
<div class="t" style="left:6px;top:5.4px;font-size:14.8px;color:#111;letter-spacing:0.3px">Top</div>
<div class="wc sel" style="left:0px;top:22px"><svg width="51" height="50" viewBox="0 0 51 50"><path transform="translate(-0.8 0)" d="M13.9 7.9L26.9 20.9 39.9 7.9 44.8 12.8 31.8 25.8 44.8 38.8 39.9 43.7 26.9 30.7 13.9 43.7 9 38.8 22 25.8 9 12.800z" fill="#fff" stroke="#222" stroke-width="1.3" stroke-linejoin="miter"/></svg></div>
<div class="wc" style="left:51px;top:22px"><svg width="51" height="50" viewBox="0 0 51 50"><path d="M16 5L5 10 2 20 10 23 12 19 13 46H38L39 19 41 23 49 20 46 10 35 5C30 8 21 8 16 5z" fill="#2b7b9c" stroke="#111" stroke-width="1" stroke-linejoin="round"/></svg></div>
<div class="wc" style="left:102px;top:22px"><svg width="51" height="50" viewBox="0 0 51 50"><path d="M12 16C20 14 32 14 40 16L47 22 48 34 41 35 40 30V36C30 38 22 38 12 36V30L11 35 4 34 5 22z" fill="#fff" stroke="#111" stroke-width="1" stroke-linejoin="round"/></svg></div>
<div class="wc" style="left:153px;top:22px"><svg width="51" height="50" viewBox="0 0 51 50"><path d="M15 10V24L6 38V43H46V38L36 24V10" fill="none" stroke="#111" stroke-width="1" stroke-linejoin="round"/><path d="M15 24L6 38V43H46V38L36 24 26 36z" fill="#fff" stroke="#111" stroke-width="1" stroke-linejoin="round"/><text x="44.5" y="50" font-size="13" font-family="Liberation Sans,sans-serif" fill="#111" text-anchor="middle">*</text></svg></div>
<div class="wc" style="left:204px;top:22px"><svg width="51" height="50" viewBox="0 0 51 50"><g fill="#f1f3fb" stroke="#b5b9c4" stroke-width="1"><path d="M8 10L6 30C8 40 20 42 25.5 34 31 42 44 40 46 30L43 10" fill="none"/><path d="M6 30C8 40 20 42 25.5 34 24 28 16 24 6 30zM46 30C44 40 31 42 25.5 34 27 28 36 24 46 30z"/></g><text x="44.5" y="50" font-size="13" font-family="Liberation Sans,sans-serif" fill="#111" text-anchor="middle">*</text></svg></div>
<div class="wc" style="left:255px;top:22px"><svg width="51" height="50" viewBox="0 0 51 50"><path d="M14 10V26M37 10V26" fill="none" stroke="#111" stroke-width="1" stroke-linejoin="round"/><path d="M14 24L5 38C10 40 18 40 24 38zM37 24L46 38C41 40 33 40 27 38z" fill="#fff" stroke="#111" stroke-width="1" stroke-linejoin="round"/><path d="M24 38h3" stroke="#111" stroke-width="1" stroke-linejoin="round"/></svg></div>
<div class="wc" style="left:306px;top:22px"><svg width="51" height="50" viewBox="0 0 51 50"><g fill="#eef0fa" stroke="#b5b9c4" stroke-width="1"><path d="M6 12C4 22 4 30 8 36 14 42 22 40 25.5 32 29 40 38 42 44 36 48 30 48 22 45 12" fill="none"/><path d="M4 28C10 22 20 24 25.5 32 22 40 14 42 8 36zM47 28C41 22 31 24 25.5 32 29 40 38 42 44 36z"/></g><text x="44.5" y="50" font-size="13" font-family="Liberation Sans,sans-serif" fill="#111" text-anchor="middle">*</text></svg></div>
<div class="wc" style="left:357px;top:22px"><svg width="51" height="50" viewBox="0 0 51 50"><g fill="#eef0fa" stroke="#b5b9c4" stroke-width="1"><path d="M6 12C4 22 4 30 8 36 14 42 22 40 25.5 32 29 40 38 42 44 36 48 30 48 22 45 12" fill="none"/><path d="M4 28C10 22 20 24 25.5 32 22 40 14 42 8 36zM47 28C41 22 31 24 25.5 32 29 40 38 42 44 36z"/></g><text x="44.5" y="50" font-size="13" font-family="Liberation Sans,sans-serif" fill="#111" text-anchor="middle">*</text></svg></div>
<div class="wc" style="left:0px;top:72px"><svg width="51" height="50" viewBox="0 0 51 50"><path d="M17 5L8 12 5 44 12 46 13 30V46H38V30L39 46 46 44 43 12 34 5z" fill="#fff" stroke="#111" stroke-width="1" stroke-linejoin="round"/><path d="M17 5L25.5 20 34 5C30 8 21 8 17 5z" fill="#2a2a6a" stroke="#111" stroke-width="1" stroke-linejoin="round"/><path d="M25.5 20V46M13 14v16M38 14v16" fill="none" stroke="#333" stroke-width="0.8"/></svg></div>
</div>
<div class="grp" style="left:1252px;top:552px;width:407px;height:72px"><div class="gh"></div>
<div class="t" style="left:6px;top:5.4px;font-size:14.8px;color:#111;letter-spacing:0.85px">Bottom</div>
<div class="wc" style="left:0px;top:22px"><svg width="51" height="50" viewBox="0 0 51 50"><path transform="translate(-0.8 0)" d="M13.9 7.9L26.9 20.9 39.9 7.9 44.8 12.8 31.8 25.8 44.8 38.8 39.9 43.7 26.9 30.7 13.9 43.7 9 38.8 22 25.8 9 12.800z" fill="#fff" stroke="#222" stroke-width="1.3" stroke-linejoin="miter"/></svg></div>
<div class="wc" style="left:51px;top:22px"><svg width="51" height="50" viewBox="0 0 51 50"><path d="M16 6H36L44 44C32 47 20 47 8 44z" fill="#0f7a1c" stroke="#111" stroke-width="1" stroke-linejoin="round"/><path d="M16 10H36" stroke="#073" stroke-width="1"/></svg></div>
<div class="wc" style="left:102px;top:22px"><svg width="51" height="50" viewBox="0 0 51 50"><path d="M14 8H38L48 38C40 46 12 46 4 38z" fill="#2b2c7c" stroke="#111" stroke-width="1" stroke-linejoin="round"/><path d="M18 8L12 43M24 8L22 45M30 8L32 45M35 8L41 43" fill="none" stroke="#111" stroke-width="0.8"/></svg></div>
<div class="wc" style="left:153px;top:22px"><svg width="51" height="50" viewBox="0 0 51 50"><path d="M12 5H40L44 44 31 46 26 22 21 46 8 44z" fill="#8fbde6" stroke="#111" stroke-width="1" stroke-linejoin="round"/><path d="M12 9H40" stroke="#235" stroke-width="0.9"/></svg></div>
<div class="wc" style="left:204px;top:22px"><svg width="51" height="50" viewBox="0 0 51 50"><path d="M9 8H43L47 40 29 43 26 30 23 43 5 40z" fill="#7db1e4" stroke="#111" stroke-width="1" stroke-linejoin="round"/><path d="M9 12H43M18 12V40M34 12V40M26 12V30M6 36l17 3M46 36l-17 3" fill="none" stroke="#234" stroke-width="0.9"/><text x="44.5" y="50" font-size="13" font-family="Liberation Sans,sans-serif" fill="#111" text-anchor="middle">*</text></svg></div>
<div class="wc" style="left:255px;top:22px"><svg width="51" height="50" viewBox="0 0 51 50"><path d="M8 15C18 18 34 18 44 15L43 20C36 24 30 30 28 36H24C22 30 16 24 9 20z" fill="#fff" stroke="#111" stroke-width="1" stroke-linejoin="round"/></svg></div>
<div class="wc sel" style="left:306px;top:22px"><svg width="51" height="50" viewBox="0 0 51 50"><path d="M8 16C18 19 34 19 44 16L43 21C36 24 31 28 29 33H23C21 28 16 24 9 21z" fill="#111" stroke="#111" stroke-width="1" stroke-linejoin="round"/><text x="44.5" y="50" font-size="13" font-family="Liberation Sans,sans-serif" fill="#111" text-anchor="middle">*</text></svg></div>
<div class="wc" style="left:357px;top:22px"><svg width="51" height="50" viewBox="0 0 51 50"><path d="M6 14C14 20 20 20 25.5 20 31 20 38 20 46 14" fill="none" stroke="#111" stroke-width="1.3"/><path d="M14 19C20 21 32 21 38 19 34 24 30 32 27 38H25C22 32 18 24 14 19z" fill="#fff" stroke="#111" stroke-width="1" stroke-linejoin="round"/></svg></div>
</div>
<div class="grp" style="left:1252px;top:632px;width:255px;height:72px"><div class="gh"></div>
<div class="t" style="left:6px;top:5.4px;font-size:14.8px;color:#111;letter-spacing:-0.15px">Legs</div>
<div class="wc sel" style="left:0px;top:22px"><svg width="51" height="50" viewBox="0 0 51 50"><path transform="translate(-0.8 0)" d="M13.9 7.9L26.9 20.9 39.9 7.9 44.8 12.8 31.8 25.8 44.8 38.8 39.9 43.7 26.9 30.7 13.9 43.7 9 38.8 22 25.8 9 12.800z" fill="#fff" stroke="#222" stroke-width="1.3" stroke-linejoin="miter"/></svg></div>
<div class="wc" style="left:51px;top:22px"><svg width="51" height="50" viewBox="0 0 51 50"><path d="M22 5H34L33 36C33 42 30 45 24 46L12 47C8 47 9 43 13 42L22 38z" fill="#fff" stroke="#111" stroke-width="1" stroke-linejoin="round"/><path d="M22 9H34" stroke="#333" stroke-width="0.8"/><text x="44.5" y="50" font-size="13" font-family="Liberation Sans,sans-serif" fill="#111" text-anchor="middle">*</text></svg></div>
<div class="wc" style="left:102px;top:22px"><svg width="51" height="50" viewBox="0 0 51 50"><path d="M22 2H33L31 36C31 43 28 46 22 47L12 48C8 48 9 44 13 43L20 39z" fill="#fff" stroke="#111" stroke-width="1" stroke-linejoin="round"/><path d="M22 7H33" stroke="#333" stroke-width="0.8"/><text x="44.5" y="50" font-size="13" font-family="Liberation Sans,sans-serif" fill="#111" text-anchor="middle">*</text></svg></div>
<div class="wc" style="left:153px;top:22px"><svg width="51" height="50" viewBox="0 0 51 50"><path d="M4 9H47V22C40 24 36 22 32 26 28 22 23 22 19 26 15 22 10 24 4 22z" fill="#111" stroke="#111" stroke-width="1" stroke-linejoin="round"/><path d="M13 24V42M38 24V42" stroke="#111" stroke-width="1.5"/></svg></div>
<div class="wc" style="left:204px;top:22px"><svg width="51" height="50" viewBox="0 0 51 50"><path d="M20 12H36L35 34C35 42 32 45 26 46L14 47C10 47 11 43 15 42L22 38z" fill="#fff" stroke="#111" stroke-width="1" stroke-linejoin="round"/><rect x="19" y="12" width="18" height="7" fill="#fff" stroke="#111" stroke-width="1" stroke-linejoin="round"/></svg></div>
</div>
</body></html>
